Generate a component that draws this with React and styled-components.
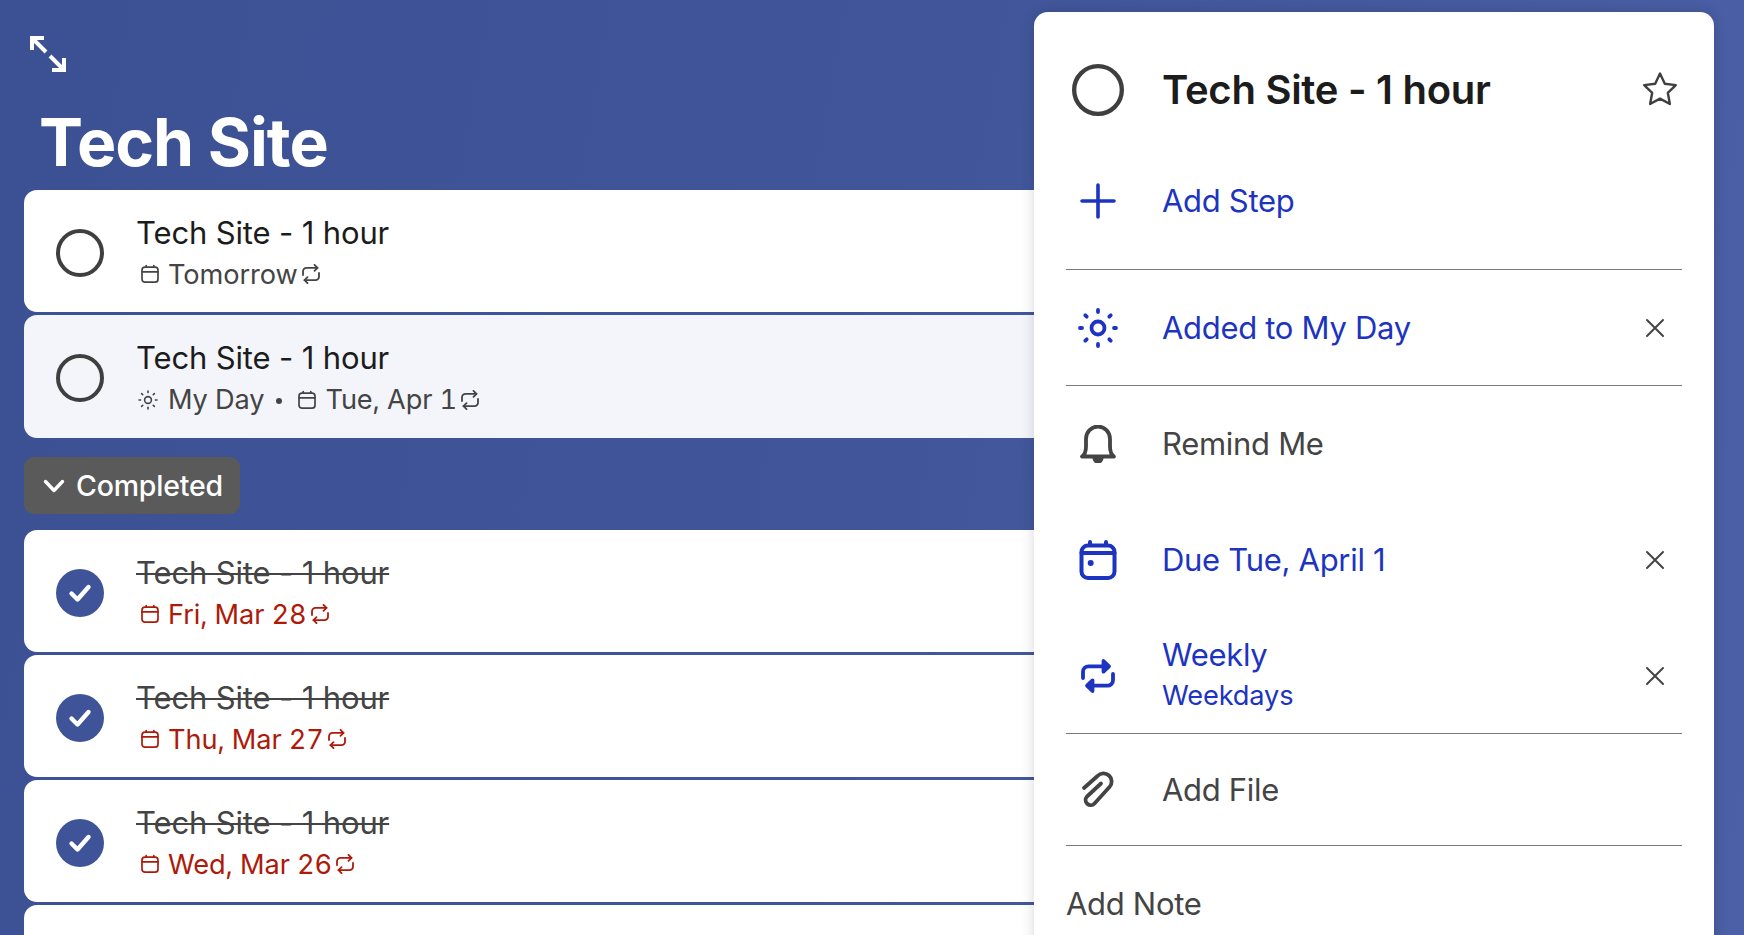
import React from 'react';
import styled, { createGlobalStyle } from 'styled-components';

const Global = createGlobalStyle`
  html, body { margin: 0; padding: 0; height: 100%; overflow: hidden; }
  body { font-family: Inter, "Liberation Sans", sans-serif; }
  #root { height: 100%; }
`;

const Page = styled.div`
  display: flex;
  width: 1744px;
  height: 935px;
  overflow: hidden;
  background: linear-gradient(100deg, #3c5194 0%, #41569a 50%, #4b60a6 100%);
`;
const ListColumn = styled.main`
  flex: 0 0 1034px;
  padding-left: 24px;
  box-sizing: border-box;
`;
const ExpandButton = styled.div`
  width: 36px;
  height: 36px;
  margin: 36px 0 0 6px;
  color: #fff;
`;
const PageTitle = styled.h1`
  margin: 30px 0 0 15px;
  height: 88px;
  font-size: 66px;
  line-height: 80px;
  font-weight: 700;
  letter-spacing: -1px;
  color: #fff;
`;
const Cards = styled.div`
  display: flex;
  flex-direction: column;
  gap: 3px;
`;
const Card = styled.div`
  display: flex;
  align-items: center;
  gap: 32px;
  box-sizing: border-box;
  height: ${p => (p.$tint ? 123 : 122)}px;
  padding-left: 32px;
  border-radius: 13px 0 0 13px;
  background: ${p => (p.$tint ? '#f3f5fa' : '#fff')};
`;
const CircleBox = styled.div`
  flex: none;
  width: 48px;
  height: 48px;
  margin-top: 3px;
  color: #3f3f3f;
`;
const CardText = styled.div`
  display: flex;
  flex-direction: column;
  padding-top: 5px;
`;
const CardTitle = styled.div`
  margin-bottom: 2px;
  font-size: 31px;
  line-height: 39px;
  letter-spacing: -0.14px;
  white-space: nowrap;
  color: ${p => (p.$done ? '#444' : '#1c1c1c')};
  text-decoration: ${p => (p.$done ? 'line-through' : 'none')};
  text-decoration-thickness: 2px;
`;
const Meta = styled.div`
  display: flex;
  align-items: center;
  height: 41px;
  font-size: 27.2px;
  letter-spacing: -0.1px;
  font-variant-numeric: tabular-nums;
  white-space: nowrap;
  color: ${p => (p.$overdue ? '#ad1a0a' : '#444')};
`;
const MetaIcon = styled.span`
  display: inline-flex;
  width: 20px;
  height: 20px;
  margin-right: ${p => p.$gap}px;
  margin-left: ${p => p.$before}px;
`;
const MetaDot = styled.span`
  width: 6px;
  height: 6px;
  border-radius: 50%;
  margin: 3px 15px 0 12px;
  background: #444;
`;
const CompletedToggle = styled.div`
  display: flex;
  align-items: center;
  gap: 10px;
  width: 216px;
  height: 57px;
  margin: 19px 0 16px;
  padding-left: 18px;
  box-sizing: border-box;
  border-radius: 10px;
  background: #5a5a5a;
  color: #fff;
  font-size: 28.5px;
  font-weight: 500;
  letter-spacing: -0.2px;
`;
const ChevronBox = styled.span`
  display: inline-flex;
  width: 24px;
  height: 24px;
`;
const DetailPanel = styled.aside`
  position: relative;
  flex: 0 0 680px;
  height: 1000px;
  margin-top: 12px;
  padding: 0 32px;
  box-sizing: border-box;
  border-radius: 14px 14px 0 0;
  background: #fff;
  box-shadow: 0 0 14px rgba(0, 0, 0, 0.16);
`;
const DetailHeader = styled.div`
  display: flex;
  align-items: center;
  box-sizing: border-box;
  height: 121px;
  padding: 52px 0 17px 6px;
`;
const DetailCircle = styled.div`
  flex: none;
  width: 52px;
  height: 52px;
  margin-right: 38px;
  color: #3f3f3f;
`;
const DetailTitle = styled.h2`
  flex: 1;
  margin: -2px 0 0;
  font-size: 40px;
  font-weight: 600;
  letter-spacing: -0.28px;
  color: #1c1c1c;
  white-space: nowrap;
`;
const StarBox = styled.div`
  width: 38px;
  height: 38px;
  margin: -2px 3px 0 0;
  color: #3f3f3f;
`;
const Row = styled.div`
  display: flex;
  align-items: center;
  box-sizing: border-box;
  height: ${p => p.$h}px;
  border-bottom: ${p => (p.$line ? '1.5px solid #7a7a7a' : 'none')};
  color: ${p => (p.$active ? '#1c34c0' : '#444')};
`;
const RowIcon = styled.div`
  flex: none;
  display: flex;
  justify-content: center;
  width: 64px;
  margin-right: 32px;
`;
const RowText = styled.div`
  flex: 1;
  display: flex;
  flex-direction: column;
`;
const RowLabel = styled.div`
  font-size: 31px;
  line-height: 40px;
  letter-spacing: -0.3px;
`;
const RowSub = styled.div`
  margin-top: 1px;
  font-size: 27.2px;
  line-height: 40px;
  letter-spacing: -0.15px;
`;
const RowClose = styled.div`
  flex: none;
  display: flex;
  justify-content: center;
  width: 54px;
  color: #444;
`;
const AddNote = styled.div`
  padding-top: 37px;
  font-size: 31px;
  line-height: 42px;
  letter-spacing: -0.3px;
  color: #444;
`;

const Svg = ({ children, size = 24, vb = 24, sw = 2, ...rest }) => (
  <svg width={size} height={size} viewBox={`0 0 ${vb} ${vb}`} fill="none" stroke="currentColor"
    strokeWidth={sw} strokeLinecap="round" strokeLinejoin="round" {...rest}>{children}</svg>
);

const Ring = ({ size }) => (
  <Svg size={size} vb={48} sw={4}><circle cx="24" cy="24" r="22" /></Svg>
);
const Checked = () => (
  <svg width="48" height="48" viewBox="0 0 48 48">
    <circle cx="24" cy="24" r="24" fill="#3f5498" />
    <path d="M15.500 24.500l6 6L32.500 18" fill="none" stroke="#fff" strokeWidth="4.4" strokeLinecap="round" strokeLinejoin="round" />
  </svg>
);
const SmallCal = () => (
  <Svg size={20} vb={20} sw={1.7}>
    <rect x="2" y="3.200" width="16" height="15" rx="3" />
    <path d="M2 7.800h16M6.200 1.500v1.700M13.800 1.500v1.700" />
  </Svg>
);
const SmallRepeat = () => (
  <Svg size={20} vb={20} sw={1.8}>
    <path d="M13.500 0.800l3 3-3 3" />
    <path d="M2 11V7.300a3.500 3.500 0 0 1 3.500-3.500h11" />
    <path d="M6.500 19.200l-3-3 3-3" />
    <path d="M18 9v3.700a3.500 3.500 0 0 1-3.500 3.500h-11" />
  </Svg>
);
const Rays = ({ r1, r2, c }) => (
  <>
    {[0, 45, 90, 135, 180, 225, 270, 315].map(a => {
      const t = (a * Math.PI) / 180;
      return <line key={a} x1={c + r1 * Math.cos(t)} y1={c + r1 * Math.sin(t)} x2={c + r2 * Math.cos(t)} y2={c + r2 * Math.sin(t)} />;
    })}
  </>
);
const SmallSun = () => (
  <Svg size={20} vb={20} sw={1.6}>
    <circle cx="10" cy="10" r="3.400" />
    <Rays c={10} r1={7.400} r2={9} />
  </Svg>
);
const BigSun = () => (
  <Svg size={40} vb={40} sw={3.8}>
    <circle cx="20" cy="20" r="6.500" />
    <Rays c={20} r1={16} r2={18} />
  </Svg>
);
const Expand = () => (
  <Svg size={36} vb={36} sw={4} strokeLinecap="butt" strokeLinejoin="miter">
    <path d="M2 14V2h12M2 2l14 14" />
    <path d="M34 22v12H22M34 34L20 20" />
  </Svg>
);
const Chevron = () => (
  <Svg size={24} vb={24} sw={3.4}><path d="M3.500 7.500L12 16.500l8.500-9" /></Svg>
);
const Star = () => (
  <Svg size={38} vb={38} sw={2.4}>
    <path d="M19 3.500l4.800 10.200 11 1.400-8 7.700 2.100 11.200L19 28.600 9.100 34l2.100-11.200-8-7.700 11-1.400z" />
  </Svg>
);
const Plus = () => (
  <Svg size={36} vb={36} sw={3.6}><path d="M18 2v32M2 18h32" /></Svg>
);
const Bell = () => (
  <Svg size={38} vb={38} sw={3.8}>
    <path d="M3 31.500h32c-3-2-4-6-4-10v-7.500a12 12.500 0 0 0-24 0v7.500c0 4-1 8-4 10z" />
    <path d="M13.500 33a5.500 5.500 0 0 0 11 0z" fill="currentColor" stroke="none" />
  </Svg>
);
const BigCal = () => (
  <Svg size={40} vb={40} sw={4}>
    <rect x="3.500" y="5.500" width="33" height="32.500" rx="6.500" />
    <path d="M3.500 13h33M12 2v3M28 2v3" />
    <circle cx="12.700" cy="23" r="3" fill="currentColor" stroke="none" />
  </Svg>
);
const BigRepeat = () => (
  <Svg size={36} vb={36} sw={3.8}>
    <path d="M23.500 3l5.500 5.300-5.500 5.300z" fill="currentColor" />
    <path d="M3 20v-6.200A5.500 5.500 0 0 1 8.500 8.300H25" />
    <path d="M12.500 33L7 27.700l5.500-5.300z" fill="currentColor" />
    <path d="M33 16v6.200a5.500 5.500 0 0 1-5.500 5.500H11" />
  </Svg>
);
const Clip = () => (
  <Svg size={38} vb={38} sw={3.8}>
    <path d="M5 17L18.500 5a8 8 0 0 1 12 11L15.500 32.500a5 5 0 0 1-7.500-7L22 12.500" />
  </Svg>
);
const Cross = () => (
  <Svg size={20} vb={20} sw={2}><path d="M2 2l16 16M18 2L2 18" /></Svg>
);

const openTasks = [
  { id: 1, meta: [{ icon: 'cal', text: 'Tomorrow' }] },
  { id: 2, tint: true, meta: [{ icon: 'sun', text: 'My Day' }, { icon: 'cal', text: 'Tue, Apr 1' }] },
];
const doneTasks = ['Fri, Mar 28', 'Thu, Mar 27', 'Wed, Mar 26'];

const Repeat = () => <MetaIcon $gap={0} $before={3}><SmallRepeat /></MetaIcon>;

const leadIcon = (m, i) => {
  if (m.icon === 'sun') return <MetaIcon $before={2} $gap={10}><SmallSun /></MetaIcon>;
  return <MetaIcon $before={i > 0 ? 0 : 4} $gap={8}><SmallCal /></MetaIcon>;
};

const App = () => (
  <>
    <Global />
    <Page>
      <ListColumn>
        <ExpandButton><Expand /></ExpandButton>
        <PageTitle>Tech Site</PageTitle>
        <Cards>
          {openTasks.map(t => (
            <Card key={t.id} $tint={t.tint}>
              <CircleBox><Ring size={48} /></CircleBox>
              <CardText>
                <CardTitle>Tech Site - 1 hour</CardTitle>
                <Meta>
                  {t.meta.map((m, i) => (
                    <React.Fragment key={m.text}>
                      {i > 0 && <MetaDot />}
                      {leadIcon(m, i)}
                      {m.text}
                    </React.Fragment>
                  ))}
                  <Repeat />
                </Meta>
              </CardText>
            </Card>
          ))}
        </Cards>
        <CompletedToggle>
          <ChevronBox><Chevron /></ChevronBox>
          Completed
        </CompletedToggle>
        <Cards>
          {doneTasks.map(d => (
            <Card key={d}>
              <CircleBox><Checked /></CircleBox>
              <CardText>
                <CardTitle $done>Tech Site - 1 hour</CardTitle>
                <Meta $overdue>
                  <MetaIcon $before={4} $gap={8}><SmallCal /></MetaIcon>
                  {d}
                  <Repeat />
                </Meta>
              </CardText>
            </Card>
          ))}
          <Card />
        </Cards>
      </ListColumn>
      <DetailPanel>
        <DetailHeader>
          <DetailCircle><Ring size={52} /></DetailCircle>
          <DetailTitle>Tech Site - 1 hour</DetailTitle>
          <StarBox><Star /></StarBox>
        </DetailHeader>
        <Row $h={137} $line $active>
          <RowIcon><Plus /></RowIcon>
          <RowText><RowLabel>Add Step</RowLabel></RowText>
        </Row>
        <Row $h={116} $line $active>
          <RowIcon><BigSun /></RowIcon>
          <RowText><RowLabel>Added to My Day</RowLabel></RowText>
          <RowClose><Cross /></RowClose>
        </Row>
        <Row $h={116}>
          <RowIcon><Bell /></RowIcon>
          <RowText><RowLabel>Remind Me</RowLabel></RowText>
        </Row>
        <Row $h={116} $active>
          <RowIcon><BigCal /></RowIcon>
          <RowText><RowLabel>Due Tue, April 1</RowLabel></RowText>
          <RowClose><Cross /></RowClose>
        </Row>
        <Row $h={116} $line $active>
          <RowIcon><BigRepeat /></RowIcon>
          <RowText>
            <RowLabel>Weekly</RowLabel>
            <RowSub>Weekdays</RowSub>
          </RowText>
          <RowClose><Cross /></RowClose>
        </Row>
        <Row $h={112} $line>
          <RowIcon><Clip /></RowIcon>
          <RowText><RowLabel>Add File</RowLabel></RowText>
        </Row>
        <AddNote>Add Note</AddNote>
      </DetailPanel>
    </Page>
  </>
);

export default App;
